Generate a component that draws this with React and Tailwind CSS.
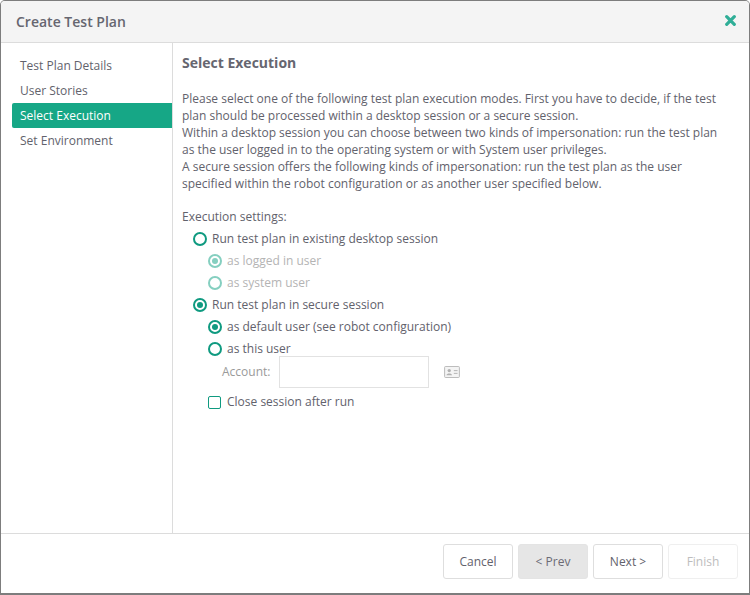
import React from 'react'

const steps = ["Test Plan Details", "User Stories", "Select Execution", "Set Environment"]

function Radio({ checked, disabled }) {
  return (
    <span className={`flex h-[14px] w-[14px] shrink-0 items-center justify-center rounded-full border-2 ${disabled ? "border-[#85cfc0]" : "border-[#0f9a80]"}`}>
      {checked && <span className={`h-[6px] w-[6px] rounded-full ${disabled ? "bg-[#85cfc0]" : "bg-[#0f9a80]"}`} />}
    </span>
  )
}

function Option({ label, checked, disabled, sub }) {
  return (
    <div className={`flex h-[22px] items-center gap-[5px] ${sub ? "pl-[26px]" : "pl-[11px]"} ${disabled ? "text-[#b4b4b4]" : ""}`}>
      <Radio checked={checked} disabled={disabled} />
      <span>{label}</span>
    </div>
  )
}

function FooterButton({ children, active, disabled }) {
  return (
    <button className={`h-[35px] w-[70px] rounded-[3px] border pt-[1px] text-[12px] ${active ? "border-[#e4e4e4] bg-[#e6e6e6] text-[#6b6b75]" : disabled ? "border-[#efefef] bg-white text-[#bdbdbd]" : "border-[#dedede] bg-white text-[#62626c]"}`}>
      {children}
    </button>
  )
}

export default function App() {
  return (
    <div className="flex h-[595px] w-[750px] flex-col overflow-hidden rounded-t-[5px] border border-[#7d7d7d] border-b-[2px] bg-white font-['Open_Sans',sans-serif] text-[12px] text-[#62626c]">
      <div className="flex h-[42px] shrink-0 items-center justify-between border-b border-[#dcdcdc] bg-[#f4f4f4] pl-[15px] pr-[13px]">
        <h1 className="text-[14px] font-semibold leading-none text-[#666670]">Create Test Plan</h1>
        <svg width="11" height="11" viewBox="0 0 11 11" className="mb-[2px]">
          <path d="M1.7 1.7 L9.3 9.3 M9.3 1.7 L1.7 9.3" stroke="#2fae97" strokeWidth="3.2" strokeLinecap="round" />
        </svg>
      </div>

      <div className="flex min-h-0 flex-1">
        <div className="w-[172px] shrink-0 border-r border-[#dcdcdc] pl-[11px] pt-[10px]">
          {steps.map((step) => (
            <div
              key={step}
              className={`flex h-[25px] items-center pl-[8px] ${step === "Select Execution" ? "rounded-l-[2px] bg-[#16a786] text-white" : ""}`}
            >
              {step}
            </div>
          ))}
        </div>

        <div className="flex-1 pl-[9px] pr-[20px] pt-[10px]">
          <h2 className="text-[14px] font-bold leading-[20px] text-[#666670]">Select Execution</h2>
          <p className="mt-[17px] leading-[17px]">
            Please select one of the following test plan execution modes. First you have to decide, if the test plan should be processed within a desktop session or a secure session.
            <br />
            Within a desktop session you can choose between two kinds of impersonation: run the test plan as the user logged in to the operating system or with System user privileges.
            <br />
            A secure session offers the following kinds of impersonation: run the test plan as the user specified within the robot configuration or as another user specified below.
          </p>

          <div className="mt-[16px] leading-[17px]">Execution settings:</div>
          <div className="mt-[3px]">
            <Option label="Run test plan in existing desktop session" />
            <Option label="as logged in user" checked disabled sub />
            <Option label="as system user" disabled sub />
            <Option label="Run test plan in secure session" checked />
            <Option label="as default user (see robot configuration)" checked sub />
            <Option label="as this user" sub />
          </div>

          <div className="mt-[-4px] flex items-center pl-[40px]">
            <span className="w-[57px] text-[#9a9a9a]">Account:</span>
            <input className="h-[32px] w-[150px] border border-[#e2e2e2] bg-white" />
            <svg className="ml-[15px]" width="16" height="12" viewBox="0 0 17 13">
              <rect x="0.5" y="0.5" width="16" height="12" rx="1" fill="#f4f4f4" stroke="#b4b4b4" />
              <circle cx="5.5" cy="5" r="1.8" fill="#b0b0b0" />
              <path d="M2.5 10 C2.5 7.6 8.5 7.6 8.5 10 Z" fill="#b0b0b0" />
              <path d="M10.5 5 H14.5 M10.5 8 H14.5" stroke="#b0b0b0" />
            </svg>
          </div>

          <div className="mt-[3px] flex h-[22px] items-center gap-[6px] pl-[26px]">
            <span className="h-[13px] w-[13px] rounded-[2px] border border-[#0f9a80]" />
            <span>Close session after run</span>
          </div>
        </div>
      </div>

      <div className="flex h-[60px] shrink-0 items-start justify-end gap-[5px] border-t border-[#dcdcdc] pr-[11px] pt-[10px]">
        <FooterButton>Cancel</FooterButton>
        <FooterButton active>&lt; Prev</FooterButton>
        <FooterButton>Next &gt;</FooterButton>
        <FooterButton disabled>Finish</FooterButton>
      </div>
    </div>
  )
}
